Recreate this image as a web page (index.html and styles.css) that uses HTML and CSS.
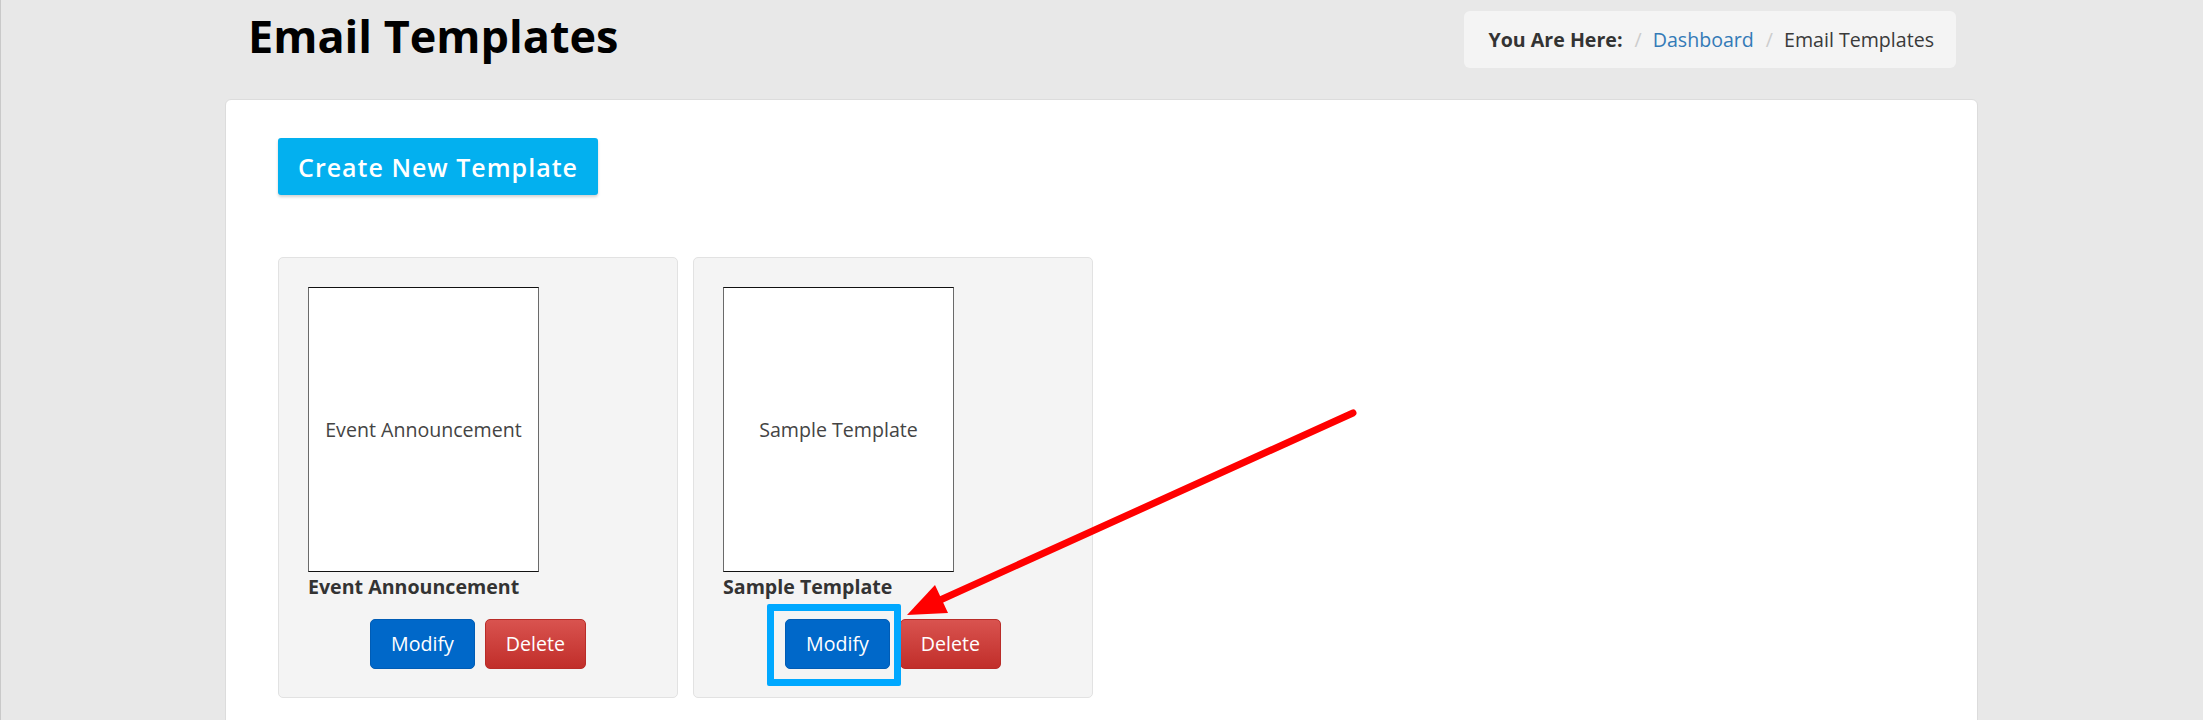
FILE: index.html
```html
<!DOCTYPE html>
<html lang="en">
<head>
  <meta charset="UTF-8" />
  <title>Email Templates</title>
  <meta name="viewport" content="width=device-width, initial-scale=1" />
  <link rel="stylesheet" href="styles.css">
</head>
<body>

<div class="page">
  <div class="page-header">
    <h1>Email Templates</h1>
    <ol class="breadcrumb">
      <li class="crumb-label">You Are Here:</li>
      <li><a href="#">Dashboard</a></li>
      <li class="active">Email Templates</li>
    </ol>
  </div>

  <div class="panel">
    <button class="btn-create">Create New Template</button>

    <div class="template-list">
      <div class="template-card">
        <div class="thumb">Event Announcement</div>
        <div class="template-name">Event Announcement</div>
        <div class="card-actions">
          <button class="btn btn-modify">Modify</button>
          <button class="btn btn-delete">Delete</button>
        </div>
      </div>

      <div class="template-card">
        <div class="thumb">Sample Template</div>
        <div class="template-name">Sample Template</div>
        <div class="card-actions">
          <button class="btn btn-modify">Modify</button>
          <button class="btn btn-delete">Delete</button>
        </div>
        <!-- annotation: highlight around modify -->
        <div class="highlight"></div>
      </div>
    </div>
  </div>
</div>

<!-- annotation arrow -->
<svg class="arrow" width="2203" height="720" viewBox="0 0 2203 720">
  <line x1="1353" y1="413" x2="938" y2="601" stroke="#ff0000" stroke-width="7" stroke-linecap="round" />
  <polygon points="907,615 935,585 948,613" fill="#ff0000" />
</svg>

</body>
</html>
```

FILE: styles.css
```css
:root {
  --page-bg: #e8e8e8;
  --text: #333;
  --link: #337ab7;
  --cyan: #03b0ef;
  --blue: #0068c9;
  --card-bg: #f4f4f4;
}

* {
  box-sizing: border-box;
}

body {
  margin: 0;
  min-height: 100vh;
  background: var(--page-bg);
  border-left: 1px solid #c9c9c9;
  font-family: 'Open Sans', 'Liberation Sans', sans-serif;
  font-size: 19.6px;
  line-height: 28px;
  color: var(--text);
  overflow: hidden;
}

.page {
  width: 1753px;
  margin-left: 224px;
}

.page-header {
  display: flex;
  justify-content: space-between;
  align-items: flex-start;
  height: 99px;
  padding-top: 11px;
}

.page-header h1 {
  margin: 0 0 0 23px;
  font-size: 45px;
  line-height: 50px;
  font-weight: 700;
  color: #000;
}

.breadcrumb {
  display: flex;
  list-style: none;
  margin: 0 22px 0 0;
  padding: 14.5px 22px 14.5px 24px;
  background: #f4f4f4;
  border-radius: 6px;
}

.breadcrumb li + li::before {
  content: "/";
  color: #ccc;
  padding: 0 11px 0 12px;
}

.breadcrumb .crumb-label {
  font-weight: 700;
}

.breadcrumb a {
  color: var(--link);
  text-decoration: none;
}

.breadcrumb .active {
  color: #3a3a3a;
}

.panel {
  background: white;
  border: 1px solid #dcdcdc;
  border-radius: 6px;
  padding: 38px 52px 60px;
  min-height: 700px;
}

.btn-create {
  display: block;
  width: 320px;
  height: 57px;
  padding: 0;
  border: none;
  border-radius: 3px;
  background: var(--cyan);
  color: white;
  font-family: 'Open Sans', sans-serif;
  font-size: 25px;
  font-weight: 600;
  letter-spacing: 1px;
  box-shadow: 0 2px 3px rgba(0, 0, 0, 0.18);
  cursor: pointer;
}

.template-list {
  display: flex;
  gap: 15px;
  margin-top: 62px;
}

.template-card {
  position: relative;
  width: 400px;
  padding: 29px 29px 28px;
  background: var(--card-bg);
  border: 1px solid #e2e2e2;
  border-radius: 5px;
}

.thumb {
  display: flex;
  align-items: center;
  justify-content: center;
  width: 231px;
  height: 285px;
  background: white;
  border: 1px solid;
  border-color: #111 #6a6a6a #111 #6a6a6a;
  color: #444;
}

.template-name {
  margin-top: 1px;
  font-weight: 700;
  color: #333;
}

.card-actions {
  display: flex;
  justify-content: center;
  gap: 10px;
  margin-top: 18px;
}

.btn {
  padding: 10px 20px;
  border: 1px solid transparent;
  border-radius: 5px;
  font-family: 'Open Sans', sans-serif;
  font-size: 19.6px;
  line-height: 28px;
  color: white;
  cursor: pointer;
}

.btn-modify {
  background: var(--blue);
  border-color: #005cb5;
}

.btn-delete {
  background: linear-gradient(#d9534f, #c12e2a);
  border-color: #b92c28;
}

.highlight {
  position: absolute;
  left: 73px;
  top: 346px;
  width: 134px;
  height: 82px;
  border: 7px solid #00a8ff;
  border-radius: 2px;
}

.arrow {
  position: absolute;
  left: 0;
  top: 0;
  pointer-events: none;
}
```
